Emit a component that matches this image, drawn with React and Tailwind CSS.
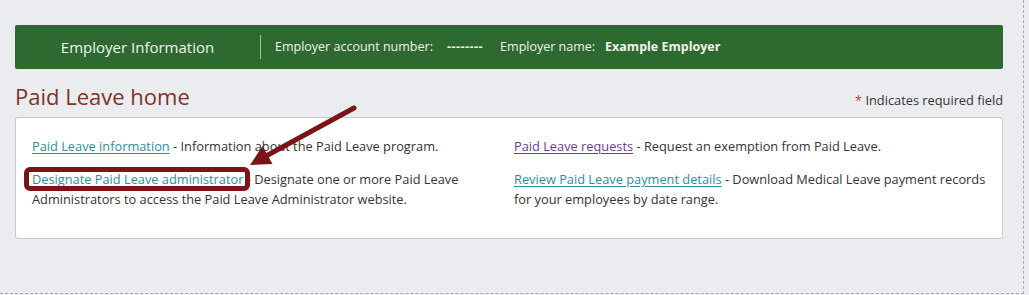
import React from "react";

const LinkItem = ({ label, visited = false, boxed = false, children }) => {
  const color = visited ? "text-[#6c3a8e]" : "text-[#2f8d99]";
  return (
    <p className="leading-[20px] text-[#333333]">
      <span className="relative">
        <a href="#" className={`${color} underline underline-offset-2`}>
          {label}
        </a>
        {boxed && (
          <span className="absolute left-[-8px] right-[-7px] top-[-3px] bottom-[-3px] border-[5px] border-[#7a1416] rounded-[6px] pointer-events-none" />
        )}
      </span>{" "}
      - {children}
    </p>
  );
};

const App = () => {
  return (
    <div
      className="w-[1029px] h-[295px] bg-[#ebecf0] relative overflow-hidden"
      style={{ fontFamily: '"Open Sans", "Noto Sans", sans-serif' }}
    >
      <div className="w-[1024px] h-[294px] border-r border-b border-dashed border-[#a9a9ae] pt-[25px] pl-[15px] pr-[20px]">
        {/* Employer bar */}
        <div className="h-[44px] bg-[#2e6a30] rounded-[2px] flex items-center text-white">
          <div className="w-[245px] text-center text-[15px] text-[#f1f5ef]">
            Employer Information
          </div>
          <div className="w-px h-[24px] bg-[#9dc39a]" />
          <div className="pl-[14px] flex items-center text-[12.5px] text-[#eef3ec]">
            <span>Employer account number:</span>
            <span className="ml-[14px] font-bold tracking-[0.5px]">--------</span>
            <span className="ml-[17px]">Employer name:</span>
            <span className="ml-[10px] font-bold">Example Employer</span>
          </div>
        </div>

        {/* Title row */}
        <div className="h-[48px] flex items-end justify-between pb-[6px]">
          <h1 className="text-[22px] leading-[30px] font-medium text-[#7b3526]">
            Paid Leave home
          </h1>
          <p className="text-[12.8px] text-[#333333] leading-[20px] pb-[1px]">
            <span className="text-[#d9342b]">*</span> Indicates required field
          </p>
        </div>

        {/* Links card */}
        <div className="h-[122px] bg-white border border-[#c9c9cc] rounded-[3px] pt-[18px] pl-[16px] pr-[4px] text-[12.8px]">
          <div className="grid grid-cols-[472px_1fr] gap-x-[10px] gap-y-[13px]">
            <LinkItem label="Paid Leave information">
              Information about the Paid Leave program.
            </LinkItem>
            <LinkItem label="Paid Leave requests" visited>
              Request an exemption from Paid Leave.
            </LinkItem>
            <LinkItem label="Designate Paid Leave administrator" boxed>
              Designate one or more Paid Leave Administrators to access the
              Paid Leave Administrator website.
            </LinkItem>
            <LinkItem label="Review Paid Leave payment details">
              Download Medical Leave payment records for your employees by date
              range.
            </LinkItem>
          </div>
        </div>
      </div>

      {/* Annotation arrow */}
      <svg
        className="absolute inset-0 pointer-events-none"
        width="1029"
        height="295"
        viewBox="0 0 1029 295"
      >
        <line
          x1="354"
          y1="108"
          x2="266"
          y2="156"
          stroke="#7a1416"
          strokeWidth="5"
          strokeLinecap="round"
        />
        <polygon points="250,165 272.5,164 262.5,146" fill="#7a1416" />
      </svg>
    </div>
  );
};

export default App;
